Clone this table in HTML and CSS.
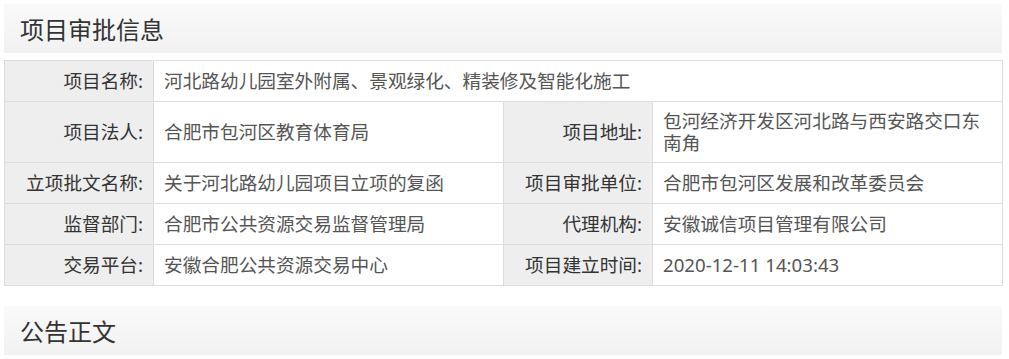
FILE: index.html
```html
<!DOCTYPE html>
<html lang="zh-CN">
<head>
<meta charset="utf-8">
<title>项目审批信息</title>
<link rel="stylesheet" href="styles.css">
</head>
<body>
<div class="page">
  <div class="section-head"><h2 class="section-title">项目审批信息</h2></div>
  <table class="info">
    <colgroup>
      <col class="c-label"><col class="c-value"><col class="c-label"><col class="c-value">
    </colgroup>
    <tr>
      <td class="label">项目名称:</td>
      <td class="value" colspan="3">河北路幼儿园室外附属、景观绿化、精装修及智能化施工</td>
    </tr>
    <tr>
      <td class="label">项目法人:</td>
      <td class="value">合肥市包河区教育体育局</td>
      <td class="label">项目地址:</td>
      <td class="value">包河经济开发区河北路与西安路交口东南角</td>
    </tr>
    <tr>
      <td class="label">立项批文名称:</td>
      <td class="value">关于河北路幼儿园项目立项的复函</td>
      <td class="label">项目审批单位:</td>
      <td class="value">合肥市包河区发展和改革委员会</td>
    </tr>
    <tr>
      <td class="label">监督部门:</td>
      <td class="value">合肥市公共资源交易监督管理局</td>
      <td class="label">代理机构:</td>
      <td class="value">安徽诚信项目管理有限公司</td>
    </tr>
    <tr>
      <td class="label">交易平台:</td>
      <td class="value">安徽合肥公共资源交易中心</td>
      <td class="label">项目建立时间:</td>
      <td class="value">2020-12-11 14:03:43</td>
    </tr>
  </table>
  <div class="section-head second"><h2 class="section-title">公告正文</h2></div>
</div>
</body>
</html>
```
FILE: styles.css
```css
html, body {
  margin: 0;
  padding: 0;
  background: #fff;
}
body {
  font-family: "Noto Sans", "Noto Sans CJK SC", sans-serif;
  color: #333;
}
.page {
  width: 998px;
  margin: 4px 0 0 4px;
}
.section-head {
  height: 49px;
  background: linear-gradient(to bottom, #fafafa, #f1f1f1);
  display: flex;
  align-items: center;
  padding-left: 16px;
  box-sizing: border-box;
}
.section-head.second {
  margin-top: 20px;
}
.section-title {
  margin: 0;
  font-size: 24px;
  font-weight: normal;
  color: #333;
  line-height: 30px;
  font-family: "Noto Sans CJK SC", sans-serif;
}
.info {
  width: 998px;
  margin-top: 7px;
  border-collapse: collapse;
  table-layout: fixed;
  font-size: 18.67px;
}
.c-label { width: 149px; }
.c-value { width: 350px; }
.info td {
  border: 1px solid #ddd;
  padding: 8px 10px;
  height: 24px;
  line-height: 22px;
  vertical-align: middle;
}
.info .label {
  background: #eee;
  text-align: right;
  color: #333;
}
.info .value {
  color: #555;
  text-align: left;
}
```
